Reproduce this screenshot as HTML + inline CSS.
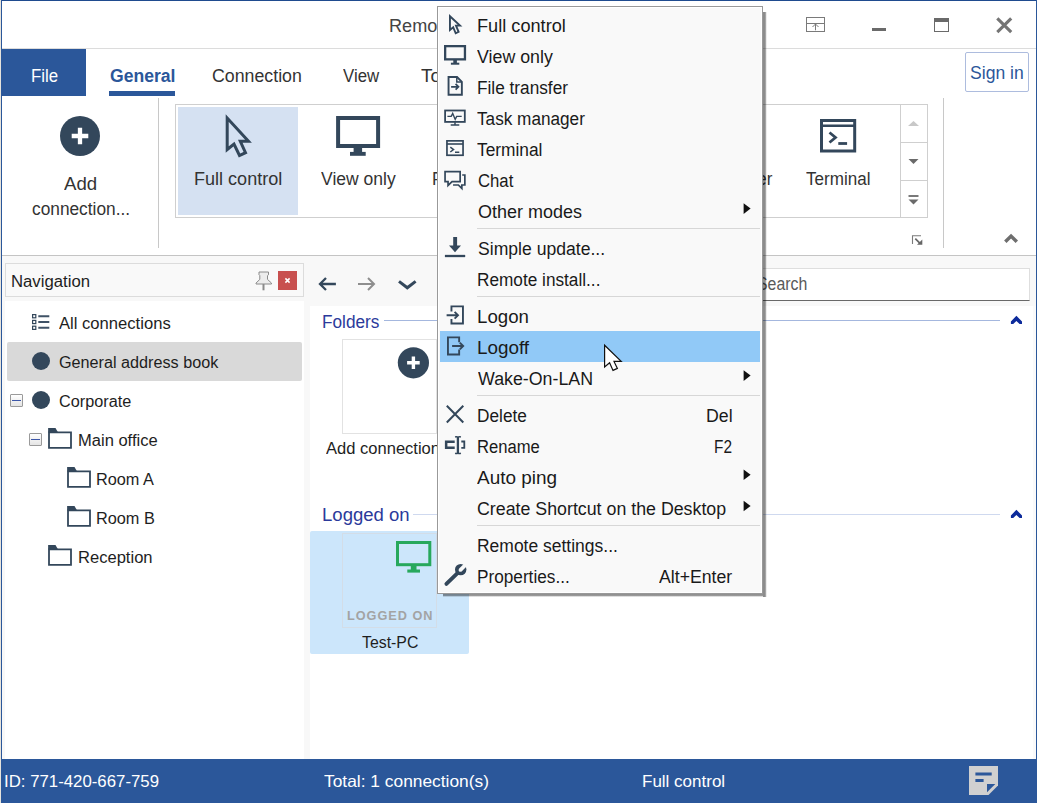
<!DOCTYPE html>
<html><head><meta charset="utf-8"><title>Remote Utilities - Viewer</title>
<style>
*{box-sizing:border-box;margin:0;padding:0}
html,body{width:1037px;height:803px;overflow:hidden;background:#fff}
body{position:relative;font-family:"Liberation Sans",sans-serif;}
.a{position:absolute}
.t{position:absolute;white-space:nowrap;transform-origin:0 50%;font-family:"Liberation Sans",sans-serif;}
svg{position:absolute;overflow:visible}
</style></head><body>
<!-- window frame -->
<div class="a" style="left:0;top:0;width:1037px;height:803px;background:#fff"></div>
<div class="a" style="left:1px;top:0;width:1036px;height:1px;background:#1f4b8f"></div>
<!-- title bar bottom line -->
<div class="a" style="left:2px;top:48px;width:1034px;height:1px;background:#dcdcdc"></div>
<!-- file tab -->
<div class="a" style="left:2px;top:49px;width:84px;height:47px;background:#2b579a"></div>
<div class="a" style="left:109px;top:91px;width:66px;height:5px;background:#2b579a"></div>
<!-- sign in -->
<div class="a" style="left:965px;top:52px;width:64px;height:40px;border:1px solid #adbcde;border-radius:2px;background:#fff"></div>
<!-- window buttons -->
<svg style="left:806px;top:17px" width="19" height="15" viewBox="0 0 19 15"><rect x="0.500" y="0.500" width="18" height="14" fill="none" stroke="#7a7a7a" stroke-width="1"/><path d="M0.500 6.500h18M9.500 7v6.300M6.500 10l3-3 3 3" fill="none" stroke="#7a7a7a" stroke-width="1"/></svg>
<div class="a" style="left:872px;top:28px;width:13.500px;height:3px;background:#6a6a6a"></div>
<div class="a" style="left:934px;top:18px;width:15px;height:14px;border:1px solid #6a6a6a;border-top-width:4px"></div>
<svg style="left:996px;top:17px" width="16.500" height="16.500" viewBox="0 0 16.500 16.500"><path d="M1.300 1.300l13.900 13.900M15.200 1.300L1.300 15.200" stroke="#757575" stroke-width="3.100" fill="none"/></svg>

<!-- ribbon -->
<div class="a" style="left:158px;top:98px;width:1px;height:150px;background:#c8c8c8"></div>
<div class="a" style="left:943px;top:98px;width:1px;height:150px;background:#c8c8c8"></div>
<div class="a" style="left:175px;top:104px;width:753px;height:114px;border:1px solid #cfcfcf;background:#fff"></div>
<div class="a" style="left:178px;top:107px;width:120px;height:108px;background:#d5e1f2"></div>
<div class="a" style="left:900px;top:105px;width:1px;height:112px;background:#cfcfcf"></div>
<div class="a" style="left:900px;top:142px;width:27px;height:1px;background:#cfcfcf"></div>
<div class="a" style="left:900px;top:180px;width:27px;height:1px;background:#cfcfcf"></div>
<svg style="left:908px;top:121px" width="11" height="5"><path d="M0 5L5.500 0l5.500 5z" fill="#c8c8c8"/></svg>
<svg style="left:908px;top:159px" width="11" height="5"><path d="M0.500 0h10L5.500 5z" fill="#6a6a6a"/></svg>
<svg style="left:908px;top:195px" width="11" height="10"><path d="M0.500 1h10" stroke="#6a6a6a" stroke-width="1.800"/><path d="M0.500 4.500h10L5.500 9.500z" fill="#6a6a6a"/></svg>
<svg style="left:0;top:0" width="1037" height="803" viewBox="0 0 1037 803"><path d="M912.500 244V235.800H921" stroke="#7a7a7a" stroke-width="1.100" fill="none"/><path d="M915.300 238.600L920 243.300" stroke="#666" stroke-width="1.700"/><path d="M922.300 239.600V244.800H917z" fill="#666"/></svg>
<svg style="left:0;top:0" width="1037" height="803" viewBox="0 0 1037 803"><path d="M1011.050 233.700L1018 240.600 1015.600 243.100 1011.050 238.500 1006.500 243.100 1004.100 240.600z" fill="#6e6e6e"/></svg>
<!-- add connection big -->
<svg style="left:60px;top:116px" width="40" height="40" viewBox="0 0 40 40"><circle cx="20" cy="20" r="20" fill="#33475b"/><path d="M20 11.700v16.600M11.700 20h16.600" stroke="#fff" stroke-width="4.300"/></svg>
<!-- full control cursor -->
<svg style="left:220px;top:110px" width="40" height="52" viewBox="0 0 40 52"><path d="M7.200 8V39.500L14 34l5.500 11.500 6-2.800-5.200-11.400h8.200z" fill="none" stroke="#33475b" stroke-width="3" stroke-linejoin="miter"/></svg>
<!-- view only monitor -->
<svg style="left:336px;top:116px" width="45" height="41" viewBox="0 0 45 41"><rect x="2.100" y="2" width="40" height="28" fill="none" stroke="#33475b" stroke-width="4"/><rect x="17.600" y="31" width="8.500" height="5.500" fill="#33475b"/><rect x="14" y="35.900" width="15.700" height="3.900" fill="#33475b"/></svg>
<!-- terminal big -->
<svg style="left:820px;top:119.200px" width="36.200" height="33.500" viewBox="0 0 36.200 33.500"><rect x="1.500" y="1.500" width="33.200" height="30.500" fill="none" stroke="#33475b" stroke-width="3"/><path d="M1.500 6.800h33.200" stroke="#33475b" stroke-width="2.600"/><path d="M9.500 13.500l6 5-6 5" fill="none" stroke="#33475b" stroke-width="2.800"/><path d="M18.300 24.500h8.800" stroke="#33475b" stroke-width="2.800"/></svg>

<!-- ribbon bottom + work area -->
<div class="a" style="left:2px;top:255px;width:1034px;height:1px;background:#c4c4c4"></div>
<div class="a" style="left:2px;top:256px;width:1034px;height:503px;background:#f8f8f8"></div>
<!-- nav -->
<div class="a" style="left:5px;top:263px;width:299px;height:34px;border:1px solid #dcdcdc;background:#f9f9f9"></div>
<div class="a" style="left:5px;top:301px;width:299px;height:458px;background:#fff"></div>
<div class="a" style="left:7px;top:342px;width:295px;height:39px;background:#d9d9d9;border-radius:2px"></div>
<div class="a" style="left:278px;top:271px;width:19px;height:19px;background:#c8504f"></div>
<svg style="left:285px;top:278px" width="5" height="5"><path d="M0.400 0.400l4.200 4.200M4.600 0.400L0.400 4.600" stroke="#fff" stroke-width="1.500"/></svg>
<svg style="left:254.500px;top:270.500px" width="18" height="20" viewBox="0 0 18 20"><path d="M4 1h9.500v2.800l-1 .8v3.800l4 3.700v.9h-15.500v-.9l3.800-3.700v-3.800l-.8-.8z" fill="#ececec" stroke="#8a8a8a" stroke-width="1"/><path d="M8.500 13v6.300" stroke="#8a8a8a" stroke-width="2"/></svg>
<!-- nav icons -->
<svg style="left:32px;top:314px" width="18" height="17" viewBox="0 0 18 17"><g fill="none" stroke="#33475b" stroke-width="1.200"><rect x="0.600" y="0.600" width="3.200" height="3.200"/><rect x="0.600" y="6.400" width="3.200" height="3.200"/><rect x="0.600" y="12.200" width="3.200" height="3.200"/></g><path d="M6.300 2.200h11M6.300 8h11M6.300 13.800h11" stroke="#3f5266" stroke-width="2"/></svg>
<div class="a" style="left:32px;top:352px;width:18px;height:18px;border-radius:50%;background:#33475b"></div>
<div class="a" style="left:32px;top:391px;width:18px;height:18px;border-radius:50%;background:#33475b"></div>
<div class="a" style="left:10px;top:394px;width:13px;height:13px;border:1px solid #9a9a9a;background:linear-gradient(#fff,#e4e4e4);border-radius:1px"></div>
<div class="a" style="left:12px;top:400px;width:9px;height:1px;background:#3d57a8"></div>
<div class="a" style="left:29px;top:433px;width:13px;height:13px;border:1px solid #9a9a9a;background:linear-gradient(#fff,#e4e4e4);border-radius:1px"></div>
<div class="a" style="left:31px;top:439px;width:9px;height:1px;background:#3d57a8"></div>
<svg style="left:48px;top:428px" width="24" height="21" viewBox="0 0 24 21"><path d="M1 19.800V4.300h22V19.800z" fill="#fff" stroke="#33475b" stroke-width="1.8" stroke-linejoin="miter"/><path d="M0.100 0h7.400l2.600 4.500H0.100z" fill="#33475b"/></svg><svg style="left:67px;top:467px" width="24" height="21" viewBox="0 0 24 21"><path d="M1 19.800V4.300h22V19.800z" fill="#fff" stroke="#33475b" stroke-width="1.8" stroke-linejoin="miter"/><path d="M0.100 0h7.400l2.600 4.500H0.100z" fill="#33475b"/></svg><svg style="left:67px;top:506px" width="24" height="21" viewBox="0 0 24 21"><path d="M1 19.800V4.300h22V19.800z" fill="#fff" stroke="#33475b" stroke-width="1.8" stroke-linejoin="miter"/><path d="M0.100 0h7.400l2.600 4.500H0.100z" fill="#33475b"/></svg><svg style="left:48px;top:545px" width="24" height="21" viewBox="0 0 24 21"><path d="M1 19.800V4.300h22V19.800z" fill="#fff" stroke="#33475b" stroke-width="1.8" stroke-linejoin="miter"/><path d="M0.100 0h7.400l2.600 4.500H0.100z" fill="#33475b"/></svg>
<!-- content -->
<div class="a" style="left:310px;top:306px;width:726px;height:453px;background:#fafafa"></div><div class="a" style="left:310px;top:306px;width:723px;height:453px;background:#fff"></div>
<svg style="left:318px;top:277px" width="18" height="14" viewBox="0 0 18 14"><path d="M17.900 7H2.500M8 1L2 7l6 6" fill="none" stroke="#33475b" stroke-width="2.300"/></svg>
<svg style="left:358px;top:277px" width="18" height="14" viewBox="0 0 18 14"><path d="M0 7h15.500M10 1l6 6-6 6" fill="none" stroke="#8e8e8e" stroke-width="2"/></svg>
<svg style="left:397.800px;top:279.500px" width="18.600" height="10.600" viewBox="0 0 18.600 10.600"><path d="M1 1.400l8.300 6.400 8.300-6.400" fill="none" stroke="#33475b" stroke-width="3"/></svg>
<!-- search -->
<div class="a" style="left:740px;top:268px;width:290px;height:33px;background:#fff;border:1px solid #dedede;border-bottom:1px solid #686868"></div>
<!-- section lines -->
<div class="a" style="left:384px;top:320px;width:616px;height:1px;background:#a4b7de"></div>
<div class="a" style="left:413px;top:514px;width:587px;height:1px;background:#cfd9ef"></div>
<svg style="left:0;top:0" width="1037" height="803" viewBox="0 0 1037 803"><path d="M1016.4 315.8 L1022.0 321.4 L1022.0 324.1 L1019.6 324.1 L1016.4 320.9 L1013.2 324.1 L1010.9 324.1 L1010.9 321.4z" fill="#0d2b9b"/></svg>
<svg style="left:0;top:0" width="1037" height="803" viewBox="0 0 1037 803"><path d="M1016.4 509.8 L1022.0 515.4 L1022.0 518.1 L1019.6 518.1 L1016.4 514.9 L1013.2 518.1 L1010.9 518.1 L1010.9 515.4z" fill="#0d2b9b"/></svg>
<!-- tiles -->
<div class="a" style="left:342px;top:339px;width:95px;height:95px;border:1px solid #e2e2e2;background:#fff"></div>
<svg style="left:0;top:0" width="1037" height="803" viewBox="0 0 1037 803"><circle cx="413.400" cy="362.800" r="15.600" fill="#33475b"/><path d="M413.400 356.500v12.600M407.100 362.800h12.600" stroke="#fff" stroke-width="3.400"/></svg>
<div class="a" style="left:310px;top:531px;width:159px;height:123px;background:#cce6fb;border-radius:2px"></div>
<div class="a" style="left:342px;top:533px;width:95px;height:95px;border:1px solid #d3dde7;background:#cce6fb"></div>
<svg style="left:395.800px;top:541px" width="36" height="32" viewBox="0 0 36 32"><rect x="1.500" y="1.500" width="32.300" height="22.200" fill="none" stroke="#27a85c" stroke-width="3"/><rect x="14.800" y="25" width="5.700" height="4" fill="#27a85c"/><rect x="11.300" y="28.500" width="12.700" height="3.100" fill="#27a85c"/></svg>
<!-- status bar -->
<div class="a" style="left:1px;top:759px;width:1036px;height:44px;background:#2b579a"></div>
<svg style="left:969px;top:766px" width="29" height="29" viewBox="0 0 29 29"><path d="M0 0h29v19.500L19.500 29H0z" fill="#d0d0d0"/><path d="M18 18h8.300L18 26.300z" fill="#2b579a"/><path d="M6.400 8h16.300M6.400 14.500h8.200" stroke="#2b579a" stroke-width="3"/></svg>
<!-- frame sides -->
<div class="a" style="left:0;top:0;width:1px;height:803px;background:#e6e3dc"></div><div class="a" style="left:1px;top:0;width:1px;height:803px;background:#2b579a"></div>
<div class="a" style="left:1036px;top:0;width:1px;height:803px;background:#2b579a"></div>
<span class="t" style="left:388.97px;top:15.1px;height:23px;line-height:23px;font-size:17.5px;color:#444;font-weight:400;transform:scaleX(1.0345);">Remo</span><span class="t" style="left:30.84px;top:64.9px;height:23px;line-height:23px;font-size:17.5px;color:#fff;font-weight:400;transform:scaleX(0.9635);">File</span><span class="t" style="left:109.80px;top:64.9px;height:23px;line-height:23px;font-size:17.5px;color:#2b579a;font-weight:700;transform:scaleX(1.0045);">General</span><span class="t" style="left:212.30px;top:64.9px;height:23px;line-height:23px;font-size:17.5px;color:#333;font-weight:400;transform:scaleX(1.0148);">Connection</span><span class="t" style="left:343.30px;top:64.9px;height:23px;line-height:23px;font-size:17.5px;color:#333;font-weight:400;transform:scaleX(0.9611);">View</span><span class="t" style="left:421.40px;top:64.9px;height:23px;line-height:23px;font-size:17.5px;color:#333;font-weight:400;transform:scaleX(1.0761);">To</span><span class="t" style="left:970.00px;top:61.8px;height:23px;line-height:23px;font-size:17.5px;color:#2b579a;font-weight:400;transform:scaleX(1.0043);">Sign in</span><span class="t" style="left:63.70px;top:172.5px;height:23px;line-height:23px;font-size:17.5px;color:#333;font-weight:400;transform:scaleX(1.0656);">Add</span><span class="t" style="left:32.20px;top:197.5px;height:23px;line-height:23px;font-size:17.5px;color:#333;font-weight:400;transform:scaleX(0.9881);">connection...</span><span class="t" style="left:193.97px;top:167.5px;height:23px;line-height:23px;font-size:17.5px;color:#333;font-weight:400;transform:scaleX(1.0311);">Full control</span><span class="t" style="left:320.50px;top:167.5px;height:23px;line-height:23px;font-size:17.5px;color:#333;font-weight:400;transform:scaleX(1.0023);">View only</span><span class="t" style="left:432.12px;top:167.5px;height:23px;line-height:23px;font-size:17.5px;color:#333;font-weight:400;transform:scaleX(0.9819);">File transfer</span><span class="t" style="left:665.50px;top:167.5px;height:23px;line-height:23px;font-size:17.5px;color:#333;font-weight:400;transform:scaleX(0.9674);">Task manager</span><span class="t" style="left:805.70px;top:167.5px;height:23px;line-height:23px;font-size:17.5px;color:#333;font-weight:400;transform:scaleX(0.9748);">Terminal</span><span class="t" style="left:10.56px;top:270.9px;height:21px;line-height:21px;font-size:16px;color:#1e1e1e;font-weight:400;transform:scaleX(1.0447);">Navigation</span><span class="t" style="left:59.10px;top:312.5px;height:21px;line-height:21px;font-size:16px;color:#1e1e1e;font-weight:400;transform:scaleX(1.0379);">All connections</span><span class="t" style="left:59.10px;top:351.5px;height:21px;line-height:21px;font-size:16px;color:#1e1e1e;font-weight:400;transform:scaleX(1.0118);">General address book</span><span class="t" style="left:59.20px;top:390.5px;height:21px;line-height:21px;font-size:16px;color:#1e1e1e;font-weight:400;transform:scaleX(1.0147);">Corporate</span><span class="t" style="left:78.07px;top:429.5px;height:21px;line-height:21px;font-size:16px;color:#1e1e1e;font-weight:400;transform:scaleX(1.0331);">Main office</span><span class="t" style="left:96.48px;top:468.5px;height:21px;line-height:21px;font-size:16px;color:#1e1e1e;font-weight:400;transform:scaleX(1.0171);">Room A</span><span class="t" style="left:96.48px;top:507.5px;height:21px;line-height:21px;font-size:16px;color:#1e1e1e;font-weight:400;transform:scaleX(1.0174);">Room B</span><span class="t" style="left:77.77px;top:546.5px;height:21px;line-height:21px;font-size:16px;color:#1e1e1e;font-weight:400;transform:scaleX(1.0349);">Reception</span><span class="t" style="left:322.14px;top:311.0px;height:23px;line-height:23px;font-size:18px;color:#2b3a9b;font-weight:400;transform:scaleX(0.9556);">Folders</span><span class="t" style="left:325.60px;top:437.9px;height:21px;line-height:21px;font-size:16.5px;color:#1e1e1e;font-weight:400;transform:scaleX(1.0022);">Add connection...</span><span class="t" style="left:321.77px;top:504.0px;height:23px;line-height:23px;font-size:18px;color:#2b3a9b;font-weight:400;transform:scaleX(1.0304);">Logged on</span><span class="t" style="left:347.00px;top:606.7px;height:17px;line-height:17px;font-size:13px;color:#a3a3a3;font-weight:700;transform:scaleX(0.9772);letter-spacing:1px;">LOGGED ON</span><span class="t" style="left:362.20px;top:632.0px;height:21px;line-height:21px;font-size:16px;color:#1e1e1e;font-weight:400;transform:scaleX(0.9903);">Test-PC</span><span class="t" style="left:757.00px;top:272.7px;height:23px;line-height:23px;font-size:17.5px;color:#5a5a5a;font-weight:400;transform:scaleX(0.9083);">Search</span><span class="t" style="left:3.88px;top:770.9px;height:21px;line-height:21px;font-size:16.5px;color:#fff;font-weight:400;transform:scaleX(1.0179);">ID: 771-420-667-759</span><span class="t" style="left:323.50px;top:770.9px;height:21px;line-height:21px;font-size:16.5px;color:#fff;font-weight:400;transform:scaleX(1.0522);">Total: 1 connection(s)</span><span class="t" style="left:642.37px;top:770.9px;height:21px;line-height:21px;font-size:16.5px;color:#fff;font-weight:400;transform:scaleX(1.0300);">Full control</span>
<!-- context menu -->
<div class="a" style="left:763px;top:12px;width:4px;height:584.5px;background:linear-gradient(90deg,rgba(0,0,0,.45) 0,rgba(0,0,0,.45) 55%,rgba(0,0,0,.12) 80%,rgba(0,0,0,0) 100%)"></div><div class="a" style="left:443px;top:594px;width:320px;height:3px;background:linear-gradient(180deg,rgba(0,0,0,.45) 0,rgba(0,0,0,.4) 50%,rgba(0,0,0,.08) 90%,rgba(0,0,0,0) 100%)"></div><div class="a" style="left:437px;top:6px;width:326px;height:588px;background:#f9f9f9;border:1px solid #999;box-shadow:inset 0 0 0 1px #fff"></div>
<div class="a" style="left:440px;top:331px;width:320px;height:31px;background:#91c9f7"></div>
<div class="a" style="left:477px;top:228px;width:283px;height:1px;background:#d7d7d7"></div>
<div class="a" style="left:477px;top:296px;width:283px;height:1px;background:#d7d7d7"></div>
<div class="a" style="left:477px;top:395px;width:283px;height:1px;background:#d7d7d7"></div>
<div class="a" style="left:477px;top:525px;width:283px;height:1px;background:#d7d7d7"></div>
<svg style="left:0;top:0" width="1037" height="803" viewBox="0 0 1037 803"><path d="M449.950 16.200V29.900L453.200 27.200 455.700 33.300 458.600 31.900 456 25.600H460z" fill="none" stroke="#33475b" stroke-width="1.900" stroke-linejoin="miter"/><rect x="445.150" y="46.150" width="19.800" height="13.200" fill="none" stroke="#33475b" stroke-width="2.300"/><rect x="453.300" y="60" width="3.600" height="3" fill="#33475b"/><rect x="450.900" y="62.700" width="8.400" height="2" fill="#33475b"/><path d="M448.550 77.050h8.500l4.800 4.800v12.950h-13.300z" fill="none" stroke="#33475b" stroke-width="1.900"/><path d="M456.800 77.300v4.800h4.800" fill="none" stroke="#33475b" stroke-width="1.500"/><path d="M451.100 86.800h7.400M455.600 83.900l2.900 2.900-2.900 2.900" fill="none" stroke="#33475b" stroke-width="1.700"/><rect x="445.100" y="110.500" width="19.700" height="11.400" fill="none" stroke="#33475b" stroke-width="1.800"/><path d="M447.400 116.400h3.800l1.500-3 2.500 6 1.500-3h5" fill="none" stroke="#33475b" stroke-width="1.400"/><path d="M455 122.300v2.600M450.700 125.100h8.600" fill="none" stroke="#33475b" stroke-width="1.500"/><rect x="446.950" y="140.850" width="16.100" height="14.400" fill="none" stroke="#33475b" stroke-width="1.700"/><path d="M446.950 144h16.100" fill="none" stroke="#33475b" stroke-width="1.600"/><path d="M450.300 147.200l3.200 2.400-3.200 2.400M455 152.200h4.300" fill="none" stroke="#33475b" stroke-width="1.500"/><path d="M445.050 171.550h15.100v10.100h-8.100l-4 3.800v-3.800h-3z" fill="none" stroke="#33475b" stroke-width="1.700"/><path d="M462.200 175h2.650v10h-3v3.400l-3.500-3.400h-5.300" fill="none" stroke="#33475b" stroke-width="1.700"/><path d="M455.150 237v9" stroke="#33475b" stroke-width="3.900"/><path d="M449 245.500h12l-6 6.700z" fill="#33475b"/><path d="M444.900 256h20.300" stroke="#33475b" stroke-width="2.300"/><path d="M451.450 311.500V306.350H462.950V323.550H451.450V318.900" fill="none" stroke="#33475b" stroke-width="1.900"/><path d="M446.600 315.300H458M454.600 311.900L458 315.300 454.600 318.700" fill="none" stroke="#33475b" stroke-width="1.900"/><path d="M459.150 342.300V337.350H447.950V354.550H459.150V349.600" fill="none" stroke="#33475b" stroke-width="1.900"/><path d="M452.100 346H463.200M459.800 342.600L463.200 346 459.800 349.400" fill="none" stroke="#33475b" stroke-width="1.900"/><path d="M446.800 405.700l16.500 16.800M463.300 405.700l-16.500 16.800" stroke="#33475b" stroke-width="2"/><path d="M454.700 441.650H446.150V447.850H454.700" fill="none" stroke="#33475b" stroke-width="2.500"/><path d="M457.900 437V453.300" stroke="#33475b" stroke-width="2.300"/><path d="M455.100 437c1.800-.7 2.800 0 2.800.900 0-.9 1-1.600 3-.9M455.100 453.300c1.800.7 2.800 0 2.800-.9 0 .9 1 1.600 3 .9" fill="none" stroke="#33475b" stroke-width="1.500"/><path d="M461.300 441.500H464.300V447.900H461.300" fill="none" stroke="#33475b" stroke-width="1.800"/><path d="M446.400 583.850L457.500 573.200" stroke="#33475b" stroke-width="3.900" stroke-linecap="round"/><circle cx="460.700" cy="569.600" r="5.700" fill="#33475b"/><path d="M460.500 569.900L467 563.400" stroke="#f9f9f9" stroke-width="3.700"/><circle cx="460.400" cy="570" r="1.850" fill="#f9f9f9"/><path d="M743.600 203.29999999999998l7 5.300-7 5.300z" fill="#111"/><path d="M743.600 370.3l7 5.300-7 5.300z" fill="#111"/><path d="M743.600 469.4l7 5.300-7 5.300z" fill="#111"/><path d="M743.600 500.7l7 5.300-7 5.300z" fill="#111"/></svg>
<span class="t" style="left:476.79px;top:15.4px;height:23px;line-height:23px;font-size:18px;color:#1a1a1a;font-weight:400;transform:scaleX(1.0089);">Full control</span><span class="t" style="left:477.20px;top:46.4px;height:23px;line-height:23px;font-size:18px;color:#1a1a1a;font-weight:400;transform:scaleX(0.9881);">View only</span><span class="t" style="left:476.84px;top:77.4px;height:23px;line-height:23px;font-size:18px;color:#1a1a1a;font-weight:400;transform:scaleX(0.9571);">File transfer</span><span class="t" style="left:476.90px;top:108.4px;height:23px;line-height:23px;font-size:18px;color:#1a1a1a;font-weight:400;transform:scaleX(0.9544);">Task manager</span><span class="t" style="left:476.90px;top:139.4px;height:23px;line-height:23px;font-size:18px;color:#1a1a1a;font-weight:400;transform:scaleX(0.9624);">Terminal</span><span class="t" style="left:477.50px;top:170.4px;height:23px;line-height:23px;font-size:18px;color:#1a1a1a;font-weight:400;transform:scaleX(0.9284);">Chat</span><span class="t" style="left:477.50px;top:201.4px;height:23px;line-height:23px;font-size:18px;color:#1a1a1a;font-weight:400;transform:scaleX(0.9986);">Other modes</span><span class="t" style="left:477.50px;top:238.4px;height:23px;line-height:23px;font-size:18px;color:#1a1a1a;font-weight:400;transform:scaleX(0.9769);">Simple update...</span><span class="t" style="left:476.84px;top:269.4px;height:23px;line-height:23px;font-size:18px;color:#1a1a1a;font-weight:400;transform:scaleX(0.9563);">Remote install...</span><span class="t" style="left:476.76px;top:306.4px;height:23px;line-height:23px;font-size:18px;color:#1a1a1a;font-weight:400;transform:scaleX(1.0366);">Logon</span><span class="t" style="left:476.75px;top:337.4px;height:23px;line-height:23px;font-size:18px;color:#1a1a1a;font-weight:400;transform:scaleX(1.0479);">Logoff</span><span class="t" style="left:477.50px;top:368.4px;height:23px;line-height:23px;font-size:18px;color:#1a1a1a;font-weight:400;transform:scaleX(0.9882);">Wake-On-LAN</span><span class="t" style="left:476.84px;top:405.4px;height:23px;line-height:23px;font-size:18px;color:#1a1a1a;font-weight:400;transform:scaleX(0.9584);">Delete</span><span class="t" style="left:476.88px;top:436.4px;height:23px;line-height:23px;font-size:18px;color:#1a1a1a;font-weight:400;transform:scaleX(0.9235);">Rename</span><span class="t" style="left:477.20px;top:467.4px;height:23px;line-height:23px;font-size:18px;color:#1a1a1a;font-weight:400;transform:scaleX(1.0526);">Auto ping</span><span class="t" style="left:477.20px;top:498.4px;height:23px;line-height:23px;font-size:18px;color:#1a1a1a;font-weight:400;transform:scaleX(0.9880);">Create Shortcut on the Desktop</span><span class="t" style="left:476.83px;top:535.4px;height:23px;line-height:23px;font-size:18px;color:#1a1a1a;font-weight:400;transform:scaleX(0.9709);">Remote settings...</span><span class="t" style="left:476.84px;top:566.4px;height:23px;line-height:23px;font-size:18px;color:#1a1a1a;font-weight:400;transform:scaleX(0.9554);">Properties...</span><span class="t" style="left:706.22px;top:405.4px;height:23px;line-height:23px;font-size:18px;color:#1a1a1a;font-weight:400;transform:scaleX(0.9836);">Del</span><span class="t" style="left:713.54px;top:436.4px;height:23px;line-height:23px;font-size:18px;color:#1a1a1a;font-weight:400;transform:scaleX(0.8552);">F2</span><span class="t" style="left:658.60px;top:566.4px;height:23px;line-height:23px;font-size:18px;color:#1a1a1a;font-weight:400;transform:scaleX(0.9819);">Alt+Enter</span>
<!-- mouse cursor -->
<svg style="left:0;top:0" width="1037" height="803" viewBox="0 0 1037 803"><path d="M604.600 345.200V367L609.600 362.800 613 370.400 617.400 368.400 614 361.400H621.200z" fill="#fff" stroke="#111" stroke-width="1.200" stroke-linejoin="miter"/></svg>
</body></html>
